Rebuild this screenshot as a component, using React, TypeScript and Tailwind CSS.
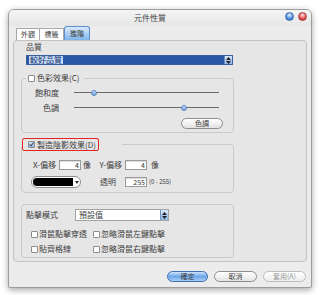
import React from 'react';

const font = "font-['Noto_Sans_CJK_TC','Noto_Sans_CJK_SC',sans-serif]";

const Check: React.FC<{ checked?: boolean }> = ({ checked }) => (
  <span
    className={`inline-flex w-[7px] h-[7px] shrink-0 items-center justify-center border border-[#8c8c8c] rounded-[1px] ${
      checked ? 'bg-gradient-to-b from-[#d6e6f8] to-[#8fb6e6]' : 'bg-white'
    }`}
  >
    {checked && (
      <svg width="7" height="7" viewBox="0 0 7 7">
        <path d="M1 3.4 L2.9 5.4 L6.3 0.6" fill="none" stroke="#1b1b1b" strokeWidth="1.3" />
      </svg>
    )}
  </span>
);

const Stepper = () => (
  <span className="flex w-[8px] h-full shrink-0 flex-col items-center justify-center gap-[1px] border-l border-[#6f8fbf] bg-gradient-to-b from-[#dbe9fa] to-[#8db5e8]">
    <svg width="5" height="3" viewBox="0 0 5 3">
      <path d="M0 3 L2.5 0 L5 3 Z" fill="#222" />
    </svg>
    <svg width="5" height="3" viewBox="0 0 5 3">
      <path d="M0 0 L2.5 3 L5 0 Z" fill="#222" />
    </svg>
  </span>
);

const Slider: React.FC<{ thumb: string }> = ({ thumb }) => (
  <div className="relative h-[10px] w-[145px]">
    <div className="absolute left-0 right-0 top-[4px] h-[1px] bg-[#6b6b6b]" />
    <div
      className={`absolute top-[2px] h-[6px] w-[6px] rounded-full border border-[#5d87c0] bg-gradient-to-b from-[#cfe3fb] to-[#5f9be0] ${thumb}`}
    />
  </div>
);

const NumBox: React.FC<{ value: string }> = ({ value }) => (
  <span className="flex h-[10px] w-[22px] items-center justify-end border border-[#9b9b9b] bg-white pr-[1px] text-[7px] leading-none text-[#333] shadow-[inset_0_1px_1px_rgba(0,0,0,0.15)]">
    {value}
  </span>
);

export default function App() {
  return (
    <div className={`w-[320px] h-[295px] bg-white pt-[9px] pl-[8px] ${font} text-[#3c3c3c]`}>
      <div className="flex h-[279px] w-[304px] flex-col rounded-t-[6px] rounded-b-[2px] border border-[#9c9c9c] bg-[#ececec] shadow-[0_2px_6px_rgba(0,0,0,0.35)]">
        {/* Title bar */}
        <div className="relative flex h-[16px] items-center justify-center rounded-t-[5px] bg-gradient-to-b from-[#f5f5f5] to-[#e6e6e6]">
          <span className="mr-[20px] text-[8px] leading-none text-[#444]">元件性質</span>
          <div className="absolute right-[4px] top-[2px] flex gap-[4px]">
            <span className="h-[9px] w-[9px] rounded-full border border-[#3a6aa8] bg-[radial-gradient(circle_at_50%_30%,#e4f0ff,#4b8be0_60%,#2a5da8)]" />
            <span className="h-[9px] w-[9px] rounded-full border border-[#a83a3a] bg-[radial-gradient(circle_at_50%_30%,#ffe4e4,#e04b4b_60%,#a82a2a)]" />
          </div>
        </div>

        {/* Tabs */}
        <div className="mt-[1px] flex h-[13px] items-end pl-[7px] text-[7px] leading-none">
          <span className="flex h-[12px] w-[24px] items-center justify-center border border-b-0 border-[#a9a9a9] bg-white">外觀</span>
          <span className="flex h-[12px] w-[24px] items-center justify-center border border-b-0 border-l-0 border-[#a9a9a9] bg-white">標籤</span>
          <span className="flex h-[14px] w-[26px] items-center justify-center rounded-t-[3px] border border-b-0 border-[#5d8fce] bg-gradient-to-b from-[#d9ebfd] to-[#7fb4ec]">進階</span>
        </div>

        {/* Panel */}
        <div className="mx-[4px] flex h-[222px] flex-col rounded-[4px] border border-[#c3c3c3] bg-[#e6e6e6] pl-[7px] text-[8px] leading-none">
          <span className="ml-[5px] mt-[1px] flex h-[10px] items-center">品質</span>
          <div className="ml-[5px] mt-[3px] flex h-[10px] w-[207px] items-stretch border border-[#3a5f9c] bg-[#2857a8]">
            <span className="flex flex-1 items-center pl-[2px]">
              <span className="bg-[#c3d8f4] px-[1px] text-[#12306e]">較好品質</span>
            </span>
            <Stepper />
          </div>

          {/* 色彩效果 */}
          <fieldset className="mt-[7px] h-[61px] w-[213px] rounded-[4px] border border-[#c9c9c9]">
            <legend className="ml-[4px] flex h-[12px] items-center gap-[2px] pl-[2px] pr-[4px]">
              <Check />
              <span>色彩效果(C)</span>
            </legend>
            <div className="mt-[4px] flex h-[10px] items-center">
              <span className="w-[37px] text-right">飽和度</span>
              <span className="ml-[15px]">
                <Slider thumb="left-[17px]" />
              </span>
            </div>
            <div className="mt-[5px] flex h-[10px] items-center">
              <span className="w-[37px] text-right">色調</span>
              <span className="ml-[15px]">
                <Slider thumb="left-[107px]" />
              </span>
            </div>
            <div className="mt-[5px] flex justify-end pr-[10px]">
              <span className="flex h-[11px] w-[42px] items-center justify-center rounded-full border border-[#8d8d8d] bg-gradient-to-b from-white to-[#e2e2e2] text-[7px]">
                色調
              </span>
            </div>
          </fieldset>

          {/* 製造陰影效果 */}
          <fieldset className="mt-[5px] h-[55px] w-[213px] rounded-[4px] border border-[#c9c9c9]">
            <legend className="pr-[23px]">
              <span className="flex h-[13px] w-[77px] items-center gap-[2px] rounded-[2px] border-[1.5px] border-[#e3241f] pl-[5px]">
                <Check checked />
                <span>製造陰影效果(D)</span>
              </span>
            </legend>
            <div className="mt-[9px] flex h-[10px] items-center">
              <span className="w-[34px] text-right">X-偏移</span>
              <span className="ml-[3px]">
                <NumBox value="4" />
              </span>
              <span className="ml-[2px] w-[8px]">像</span>
              <span className="w-[31px] text-right">Y-偏移</span>
              <span className="ml-[3px]">
                <NumBox value="4" />
              </span>
              <span className="ml-[4px]">像</span>
            </div>
            <div className="mt-[6px] flex h-[12px] items-center">
              <span className="ml-[9px] flex h-[12px] w-[50px] items-stretch overflow-hidden rounded-full border border-[#8d8d8d] bg-white">
                <span className="my-[1px] ml-[1px] flex-1 rounded-l-full bg-black" />
                <span className="flex w-[7px] items-center justify-center">
                  <svg width="4" height="3" viewBox="0 0 4 3">
                    <path d="M0 0 L2 3 L4 0 Z" fill="#333" />
                  </svg>
                </span>
              </span>
              <span className="w-[35px] text-right">透明</span>
              <span className="ml-[9px]">
                <NumBox value="255" />
              </span>
              <span className="ml-[2px] text-[6px]">(0 - 255)</span>
            </div>
          </fieldset>

          {/* 點擊模式 */}
          <fieldset className="mt-[11px] h-[54px] w-[213px] rounded-[4px] border border-[#c9c9c9]">
            <div className="mt-[4px] flex h-[12px] items-center pl-[4px]">
              <span className="w-[49px]">點擊模式</span>
              <span className="flex h-[12px] w-[94px] items-stretch border border-[#a3a3a3] bg-white">
                <span className="flex flex-1 items-center pl-[3px]">預設值</span>
                <Stepper />
              </span>
            </div>
            <div className="mt-[8px] flex h-[10px] items-center pl-[9px]">
              <span className="flex w-[62px] items-center gap-[1px]">
                <Check />
                <span>滑鼠點擊穿透</span>
              </span>
              <span className="flex items-center gap-[1px]">
                <Check />
                <span>忽略滑鼠左鍵點擊</span>
              </span>
            </div>
            <div className="mt-[5px] flex h-[10px] items-center pl-[9px]">
              <span className="flex w-[62px] items-center gap-[1px]">
                <Check />
                <span>貼齊格線</span>
              </span>
              <span className="flex items-center gap-[1px]">
                <Check />
                <span>忽略滑鼠右鍵點擊</span>
              </span>
            </div>
          </fieldset>
        </div>

        {/* Buttons */}
        <div className="mt-[9px] flex justify-end gap-[6px] pr-[5px] text-[7px] leading-none">
          <span className="flex h-[11px] w-[41px] items-center justify-center rounded-full border border-[#3f6fae] bg-gradient-to-b from-[#cfe4fb] via-[#6ea6e8] to-[#a8cff5]">
            確定
          </span>
          <span className="flex h-[11px] w-[43px] items-center justify-center rounded-full border border-[#8d8d8d] bg-gradient-to-b from-white to-[#e4e4e4]">
            取消
          </span>
          <span className="flex h-[11px] w-[43px] items-center justify-center rounded-full border border-[#bdbdbd] bg-gradient-to-b from-white to-[#eeeeee] text-[#9a9a9a]">
            套用(A)
          </span>
        </div>
      </div>
    </div>
  );
}
